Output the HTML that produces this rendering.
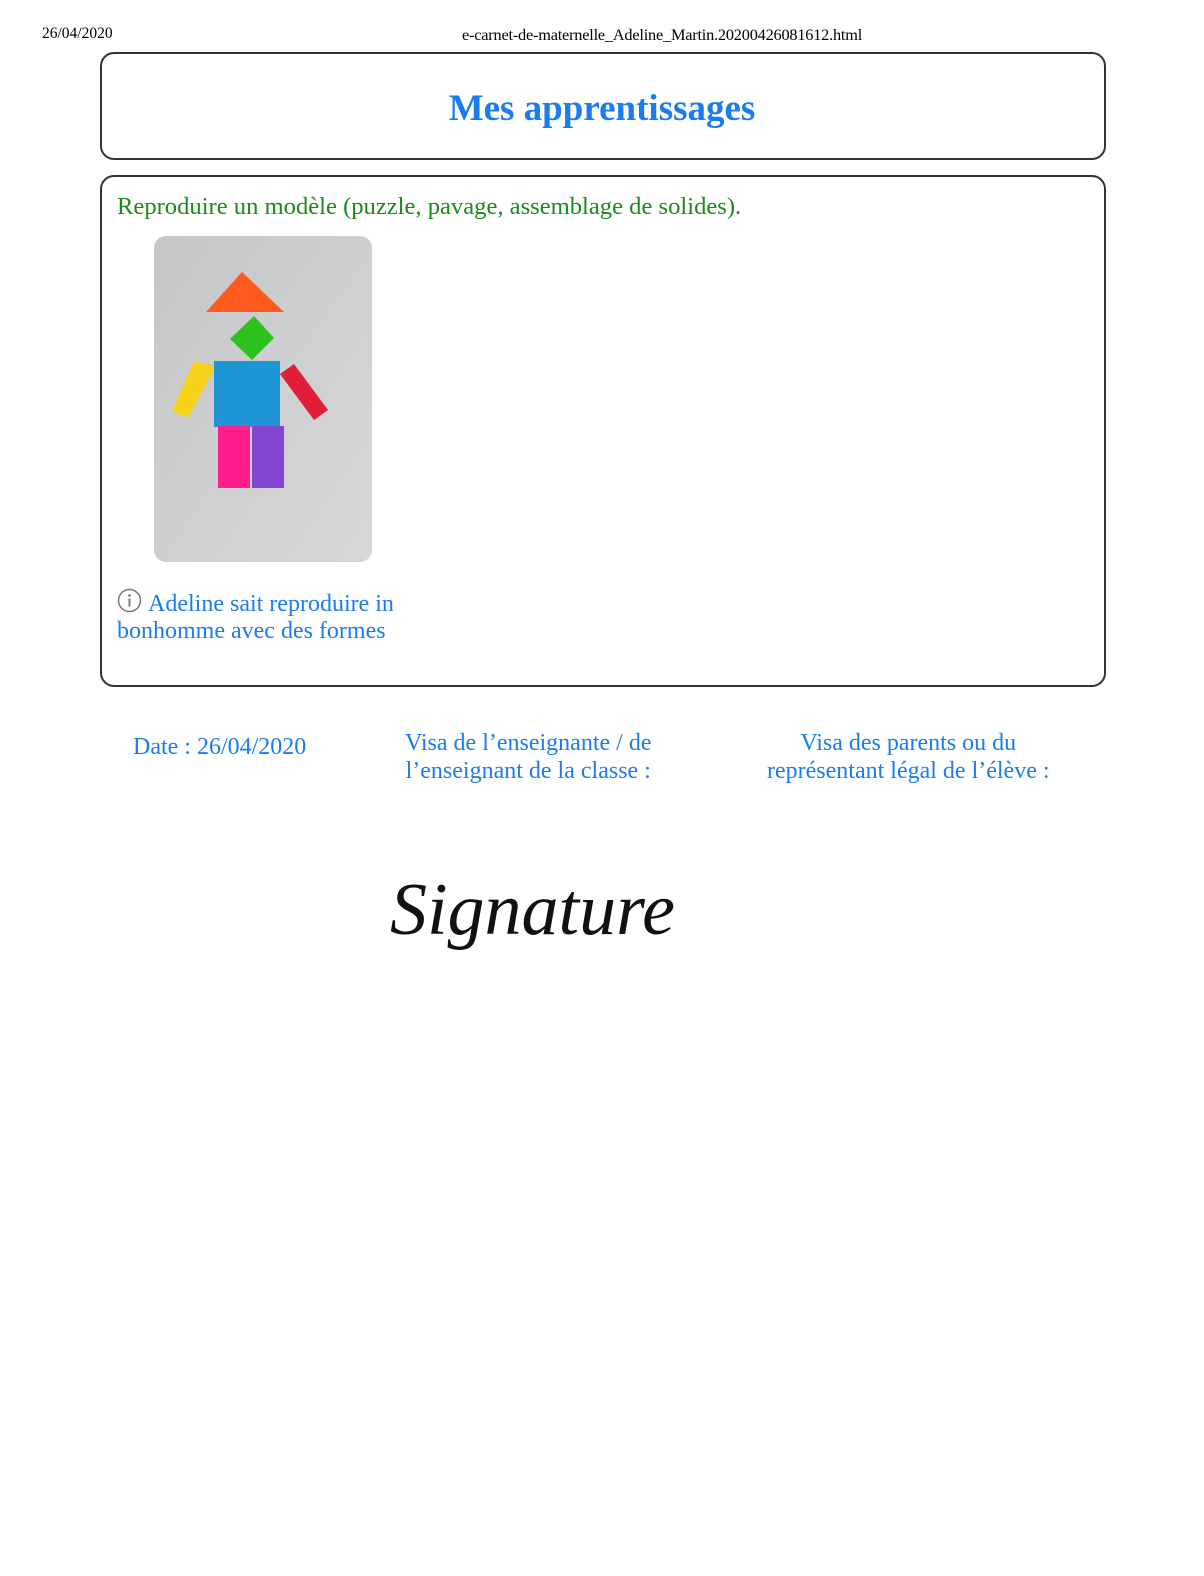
<!DOCTYPE html>
<html><head><meta charset="utf-8"><style>
body{margin:0;width:1204px;height:1576px;background:#fff;position:relative;font-family:"Liberation Serif",serif;}
.a{position:absolute;white-space:nowrap}
.box{position:absolute;border:2px solid #333;border-radius:14px;box-sizing:border-box}
.blue{color:#1a7cf0}
</style></head><body>
<div class="a" style="left:42px;top:25px;font-size:15.5px">26/04/2020</div>
<div class="a" style="left:462px;top:25px;font-size:16.3px;letter-spacing:-0.2px">e-carnet-de-maternelle_Adeline_Martin.20200426081612.html</div>
<div class="box" style="left:100px;top:52px;width:1006px;height:108px"></div>
<div class="a blue" style="left:0;width:1204px;text-align:center;top:87px;font-size:37px;font-weight:bold">Mes apprentissages</div>
<div class="box" style="left:100px;top:175px;width:1006px;height:512px"></div>
<div class="a" style="left:117px;top:193px;font-size:24.6px;color:#1a8a1a">Reproduire un modèle (puzzle, pavage, assemblage de solides).</div>
<svg class="a" style="left:154px;top:236px" width="218" height="326" viewBox="0 0 218 326">
<defs><linearGradient id="g" x1="0" y1="0" x2="1" y2="1"><stop offset="0" stop-color="#c4c6c8"/><stop offset="1" stop-color="#d6d8d9"/></linearGradient></defs>
<rect x="0" y="0" width="218" height="326" rx="12" fill="url(#g)"/>
<polygon points="52,76 88,36 130,76" fill="#ff5a1e"/>
<polygon points="76,103 100,80 120,102 98,124" fill="#2bc21e"/>
<polygon points="18,175 40,125 62,130 34,182" fill="#f6d21a"/>
<rect x="60" y="125" width="66" height="66" fill="#1e96d6"/>
<polygon points="126,138 140,128 174,174 160,184" fill="#e01e3a"/>
<rect x="64" y="190" width="32" height="62" fill="#ff1e8c"/>
<rect x="98" y="190" width="32" height="62" fill="#8246d2"/>
</svg>
<svg class="a" style="left:117px;top:588px" width="25" height="25" viewBox="0 0 25 25"><circle cx="12.5" cy="12.5" r="11" fill="none" stroke="#777" stroke-width="1.5"/><circle cx="12.5" cy="7.5" r="1.3" fill="#777"/><rect x="11.5" y="10.5" width="2" height="8" fill="#777"/></svg>
<div class="a blue" style="left:148px;top:591px;font-size:24px">Adeline sait reproduire in</div>
<div class="a blue" style="left:117px;top:618px;font-size:24px">bonhomme avec des formes</div>
<div class="a blue" style="left:133px;top:734px;font-size:24px">Date : 26/04/2020</div>
<div class="a blue" style="left:405px;top:729px;font-size:24px;text-align:center;line-height:28px">Visa de l’enseignante / de<br>l’enseignant de la classe :</div>
<div class="a blue" style="left:767px;top:729px;font-size:24px;text-align:center;line-height:28px">Visa des parents ou du<br>représentant légal de l’élève :</div>
<div class="a" style="left:390px;top:868px;font-size:74px;font-style:italic;color:#111;font-family:'Liberation Serif',serif;">Signature</div>
</body></html>
